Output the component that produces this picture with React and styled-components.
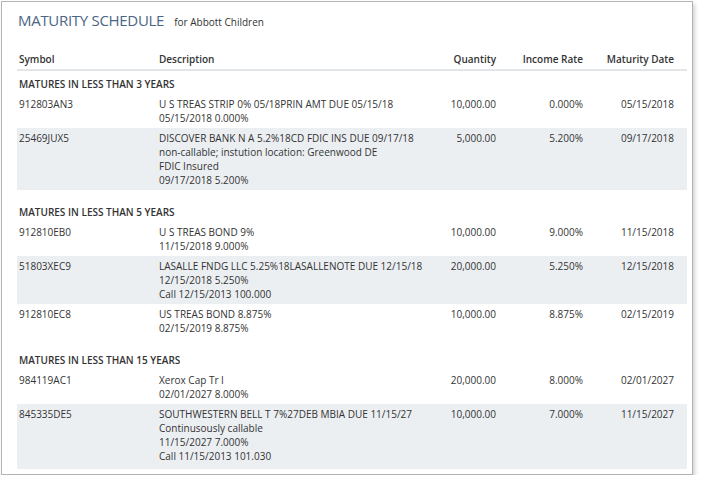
import styled, { createGlobalStyle } from 'styled-components';

const GlobalStyle = createGlobalStyle`
  body {
    margin: 0;
    background: #fff;
    font-family: "Open Sans", "Noto Sans", sans-serif;
    color: #333;
  }
`;

const Frame = styled.div`
  box-sizing: border-box;
  margin: 1px 0 0 1px;
  width: 692px;
  height: 474px;
  border: 1px solid #b3b3b3;
  box-shadow: 2px 3px 4px rgba(0, 0, 0, 0.18);
  padding: 0 5px 0 15px;
  background: #fff;
`;

const TitleBar = styled.div`
  display: flex;
  align-items: baseline;
  gap: 10px;
  padding: 8px 0 0 1px;
  height: 30px;
  box-sizing: border-box;
`;

const Title = styled.h1`
  margin: 0;
  font-size: 15px;
  font-weight: 400;
  color: #4b6585;
  letter-spacing: -0.3px;
`;

const Subtitle = styled.span`
  font-size: 10px;
  color: #333;
`;

const Table = styled.table`
  width: 670px;
  margin-top: 20px;
  border-collapse: collapse;
  table-layout: fixed;
  font-size: 10px;
  line-height: 14px;
  border-bottom: 3px solid #eceff2;
`;

const HeadCell = styled.th`
  padding: 0 ${({ $right }) => ($right ? '13px' : '2px')} 3px 2px;
  text-align: ${({ $right }) => ($right ? 'right' : 'left')};
  font-weight: 600;
  color: #333;
  border-bottom: 2px solid #e3e6e9;
`;

const GroupCell = styled.td`
  padding: ${({ $first }) => ($first ? '6px' : '15px')} 2px 3px;
  font-weight: 600;
  text-transform: uppercase;
  color: #333;
`;

const Row = styled.tr`
  background: ${({ $shaded }) => ($shaded ? '#eceff2' : '#fff')};
`;

const Cell = styled.td`
  padding: 3px ${({ $right }) => ($right ? '13px' : '2px')} 3px 2px;
  vertical-align: top;
  text-align: ${({ $right }) => ($right ? 'right' : 'left')};
  color: #333;
`;

const Line = styled.div`
  white-space: nowrap;
`;

const groups = [
  {
    label: 'Matures in less than 3 years',
    rows: [
      { symbol: '912803AN3', desc: ['U S TREAS STRIP 0% 05/18PRIN AMT DUE 05/15/18', '05/15/2018 0.000%'], qty: '10,000.00', rate: '0.000%', date: '05/15/2018' },
      { symbol: '25469JUX5', desc: ['DISCOVER BANK N A 5.2%18CD FDIC INS DUE 09/17/18', 'non-callable; instution location: Greenwood DE', 'FDIC Insured', '09/17/2018 5.200%'], qty: '5,000.00', rate: '5.200%', date: '09/17/2018' },
    ],
  },
  {
    label: 'Matures in less than 5 years',
    rows: [
      { symbol: '912810EB0', desc: ['U S TREAS BOND 9%', '11/15/2018 9.000%'], qty: '10,000.00', rate: '9.000%', date: '11/15/2018' },
      { symbol: '51803XEC9', desc: ['LASALLE FNDG LLC 5.25%18LASALLENOTE DUE 12/15/18', '12/15/2018 5.250%', 'Call 12/15/2013 100.000'], qty: '20,000.00', rate: '5.250%', date: '12/15/2018' },
      { symbol: '912810EC8', desc: ['US TREAS BOND 8.875%', '02/15/2019 8.875%'], qty: '10,000.00', rate: '8.875%', date: '02/15/2019' },
    ],
  },
  {
    label: 'Matures in less than 15 years',
    rows: [
      { symbol: '984119AC1', desc: ['Xerox Cap Tr I', '02/01/2027 8.000%'], qty: '20,000.00', rate: '8.000%', date: '02/01/2027' },
      { symbol: '845335DE5', desc: ['SOUTHWESTERN BELL T 7%27DEB MBIA DUE 11/15/27', 'Continusously callable', '11/15/2027 7.000%', 'Call 11/15/2013 101.030'], qty: '10,000.00', rate: '7.000%', date: '11/15/2027' },
    ],
  },
];

export default function App() {
  return (
    <>
      <GlobalStyle />
      <Frame>
        <TitleBar>
          <Title>MATURITY SCHEDULE</Title>
          <Subtitle>for Abbott Children</Subtitle>
        </TitleBar>
        <Table>
          <colgroup>
            <col style={{ width: 140 }} />
            <col style={{ width: 273 }} />
            <col style={{ width: 79 }} />
            <col style={{ width: 87 }} />
            <col style={{ width: 91 }} />
          </colgroup>
          <thead>
            <tr>
              <HeadCell>Symbol</HeadCell>
              <HeadCell>Description</HeadCell>
              <HeadCell $right>Quantity</HeadCell>
              <HeadCell $right>Income Rate</HeadCell>
              <HeadCell $right>Maturity Date</HeadCell>
            </tr>
          </thead>
          {groups.map((group, gi) => (
            <tbody key={group.label}>
              <tr>
                <GroupCell colSpan={5} $first={gi === 0}>{group.label}</GroupCell>
              </tr>
              {group.rows.map((row, ri) => (
                <Row key={row.symbol} $shaded={ri % 2 === 1}>
                  <Cell>{row.symbol}</Cell>
                  <Cell>
                    {row.desc.map(line => <Line key={line}>{line}</Line>)}
                  </Cell>
                  <Cell $right>{row.qty}</Cell>
                  <Cell $right>{row.rate}</Cell>
                  <Cell $right>{row.date}</Cell>
                </Row>
              ))}
            </tbody>
          ))}
        </Table>
      </Frame>
    </>
  );
}
